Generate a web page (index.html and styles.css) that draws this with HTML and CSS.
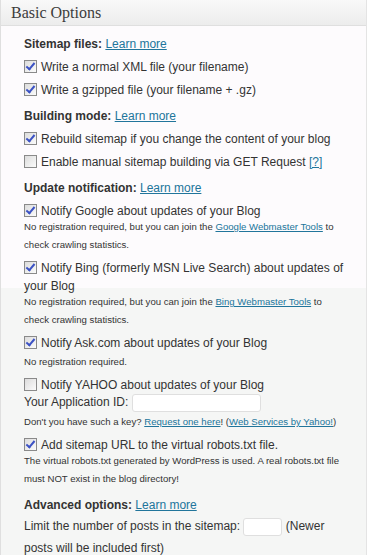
FILE: index.html
```html
<!DOCTYPE html>
<html lang="en">
<head>
    <meta charset="UTF-8">
    <meta name="viewport" content="width=device-width, initial-scale=1.0">
    <title>Basic Options</title>
    <link rel="stylesheet" href="styles.css">
</head>
<body>

<div class="postbox">
    <h3 class="hndle">Basic Options</h3>
    <div class="inside">
        <ul class="options">
            <li class="section"><b>Sitemap files:</b> <a href="#">Learn more</a></li>
            <li class="opt"><span class="cb checked"></span>Write a normal XML file (your filename)</li>
            <li class="opt"><span class="cb checked"></span>Write a gzipped file (your filename + .gz)</li>

            <li class="section"><b>Building mode:</b> <a href="#">Learn more</a></li>
            <li class="opt"><span class="cb checked"></span>Rebuild sitemap if you change the content of your blog</li>
            <li class="opt"><span class="cb"></span>Enable manual sitemap building via GET Request <a href="#">[?]</a></li>

            <li class="section"><b>Update notification:</b> <a href="#">Learn more</a></li>
            <li class="opt">
                <span class="cb checked"></span>Notify Google about updates of your Blog
                <div class="note">No registration required, but you can join the <a href="#">Google Webmaster Tools</a> to check crawling statistics.</div>
            </li>
            <li class="opt">
                <span class="cb checked"></span>Notify Bing (formerly MSN Live Search) about updates of your Blog
                <div class="note">No registration required, but you can join the <a href="#">Bing Webmaster Tools</a> to check crawling statistics.</div>
            </li>
            <li class="opt">
                <span class="cb checked"></span>Notify Ask.com about updates of your Blog
                <div class="note spaced">No registration required.</div>
            </li>
            <li class="opt">
                <span class="cb"></span>Notify YAHOO about updates of your Blog
                <div class="field">Your Application ID: <input type="text" class="appid"></div>
                <div class="note spaced">Don't you have such a key? <a href="#">Request one here</a>! (<a href="#">Web Services by Yahoo!</a>)</div>
            </li>
            <li class="opt">
                <span class="cb checked"></span>Add sitemap URL to the virtual robots.txt file.
                <div class="note">The virtual robots.txt generated by WordPress is used. A real robots.txt file must NOT exist in the blog directory!</div>
            </li>

            <li class="section"><b>Advanced options:</b> <a href="#">Learn more</a></li>
            <li class="opt limit">Limit the number of posts in the sitemap: <input type="text" class="small-input"> (Newer posts will be included first)</li>
        </ul>
    </div>
</div>

</body>
</html>
```

FILE: styles.css
```css
body {
    margin: 0;
    padding: 0;
    font-family: "Liberation Sans", Arial, sans-serif;
    font-size: 12px;
    color: #333;
    background-color: #f5f6f5;
}

a {
    color: #21759b;
}

.postbox {
    border-left: 1px solid #dfdfdf;
    border-right: 1px solid #e4e4e4;
    min-height: 555px;
    background: linear-gradient(#fdfbfd 288px, #f5f6f5 288px);
}

.hndle {
    margin: 0;
    height: 26px;
    line-height: 25px;
    padding-left: 10px;
    font-family: "Liberation Serif", Georgia, serif;
    font-size: 16px;
    font-weight: normal;
    color: #3c3c3c;
    background: linear-gradient(#f9f9f9, #ececec);
    border-bottom: 1px solid #dfdfdf;
    box-sizing: border-box;
}

.inside {
    padding: 9px 20px 0 23px;
}

.options {
    list-style: none;
    margin: 0;
    padding: 0;
}

.options li {
    line-height: 18px;
    margin-bottom: 5px;
}

.options li.section {
    margin-top: 8px;
}

.options li.section:first-child {
    margin-top: 0;
}

.cb {
    display: inline-block;
    width: 11px;
    height: 11px;
    border: 1px solid #8a8a8a;
    background: linear-gradient(135deg, #dcdcdc, #fbfbfb);
    vertical-align: -2px;
    margin-right: 4px;
    position: relative;
}

.cb.checked::after {
    content: "";
    position: absolute;
    left: 3px;
    top: 0px;
    width: 3px;
    height: 7px;
    border: solid #3c52c4;
    border-width: 0 2px 2px 0;
    transform: rotate(40deg);
}

.note {
    font-size: 9.6px;
    line-height: 18px;
    margin-top: -2px;
}

.note.spaced {
    margin-top: 1px;
}

.field {
    line-height: 20px;
    margin-top: -2px;
}

.options li.limit {
    line-height: 22px;
    margin-top: -4px;
}

input[type="text"] {
    height: 18px;
    box-sizing: border-box;
    border: 1px solid #dfdfdf;
    border-radius: 3px;
    background: #fff;
    vertical-align: middle;
    padding: 0 3px;
    font-size: 12px;
}

.appid {
    width: 129px;
}

.small-input {
    width: 39px;
}
```
